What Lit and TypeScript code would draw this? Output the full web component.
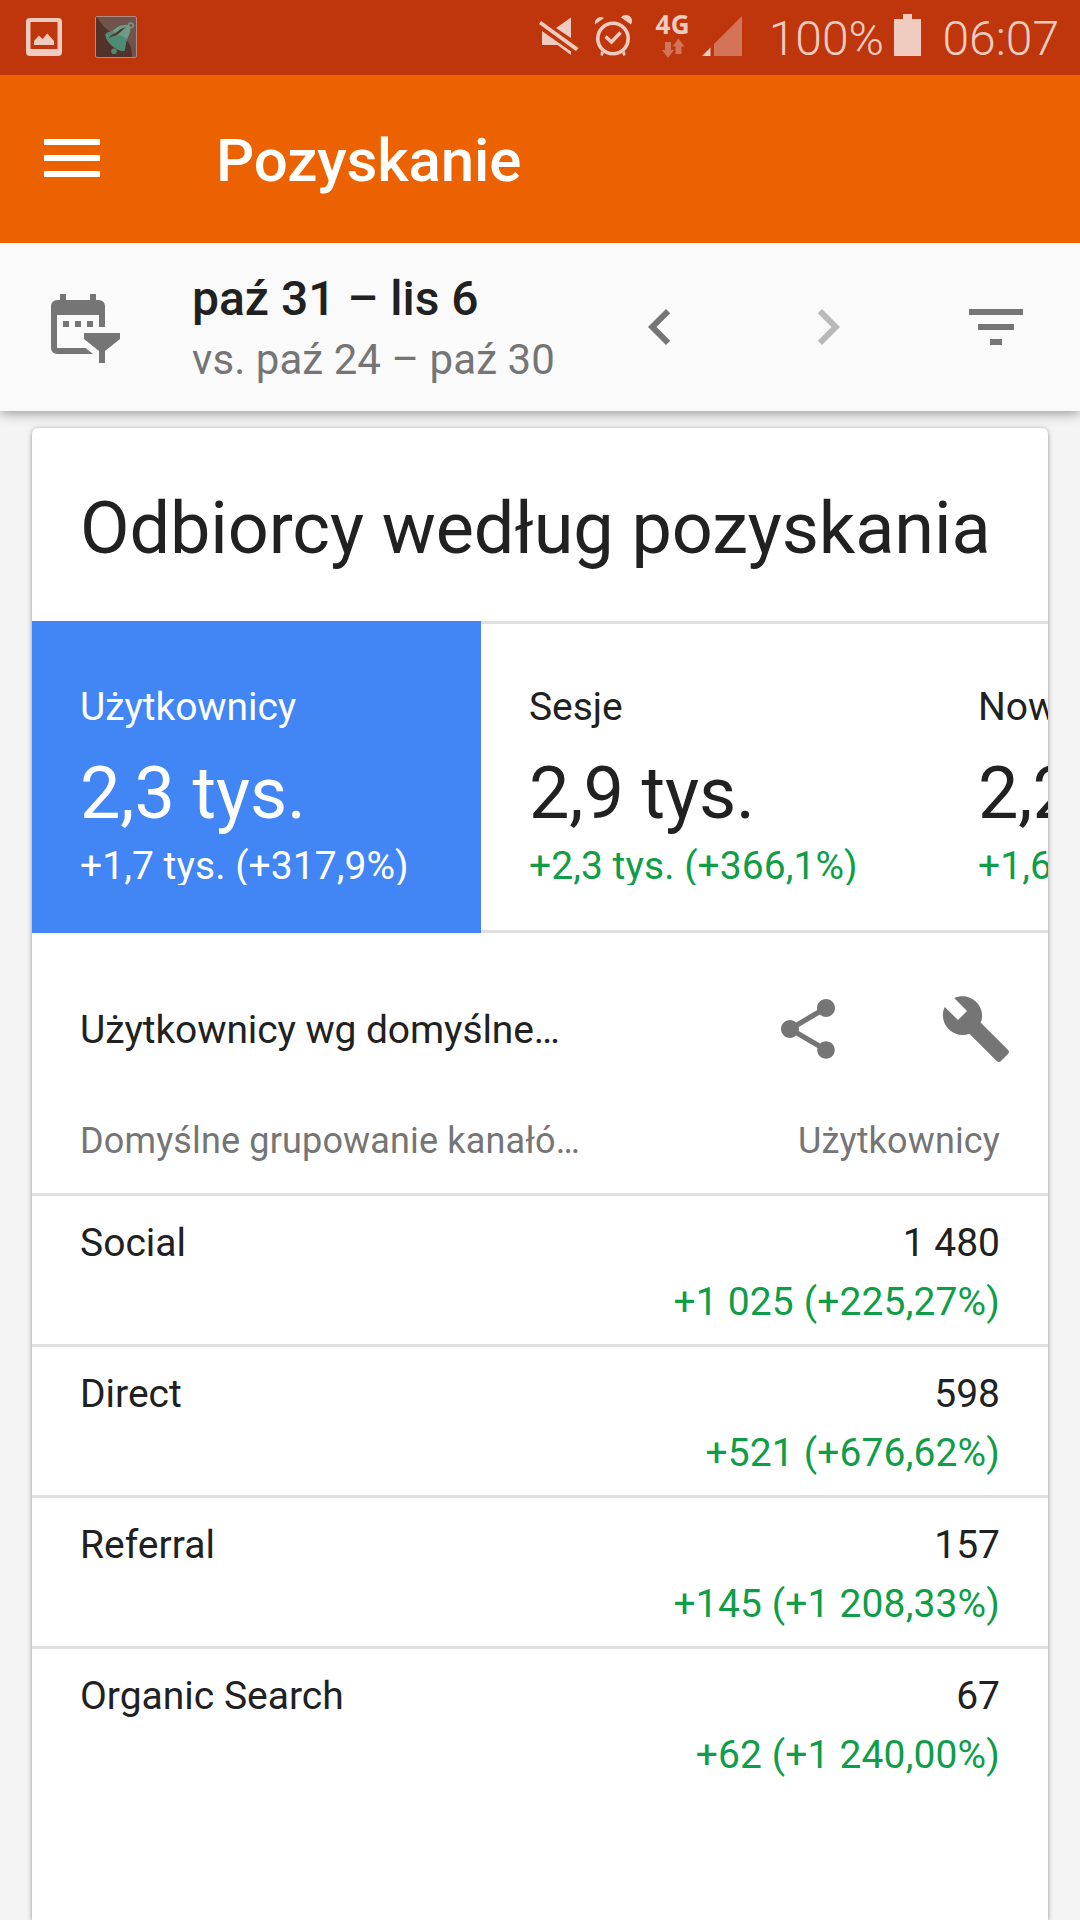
import { LitElement, html, css, svg } from "lit";
import { customElement, property } from "lit/decorators.js";

interface Metric {
  label: string;
  value: string;
  change: string;
}

interface Channel {
  name: string;
  users: string;
  change: string;
}

const METRICS: Metric[] = [
  { label: "Użytkownicy", value: "2,3 tys.", change: "+1,7 tys. (+317,9%)" },
  { label: "Sesje", value: "2,9 tys.", change: "+2,3 tys. (+366,1%)" },
  { label: "Nowi", value: "2,2 tys.", change: "+1,6 tys." },
];

const CHANNELS: Channel[] = [
  { name: "Social", users: "1 480", change: "+1 025 (+225,27%)" },
  { name: "Direct", users: "598", change: "+521 (+676,62%)" },
  { name: "Referral", users: "157", change: "+145 (+1 208,33%)" },
  { name: "Organic Search", users: "67", change: "+62 (+1 240,00%)" },
];

const GLYPHS: Record<string, unknown> = {
  prev: svg`<path d="M15.41 7.41L14 6l-6 6 6 6 1.41-1.41L10.83 12z"/>`,
  next: svg`<path d="M10 6L8.59 7.41 13.17 12l-4.58 4.59L10 18l6-6z"/>`,
  filter: svg`<path d="M10 18h4v-2h-4v2zM3 6v2h18V6H3zm3 7h12v-2H6v2z"/>`,
  share: svg`<path d="M18 16.08c-.76 0-1.44.3-1.96.77L8.91 12.7c.05-.23.09-.46.09-.7s-.04-.47-.09-.7l7.05-4.11c.54.5 1.25.81 2.04.81 1.66 0 3-1.34 3-3s-1.34-3-3-3-3 1.34-3 3c0 .24.04.47.09.7L8.04 9.81C7.5 9.31 6.79 9 6 9c-1.66 0-3 1.34-3 3s1.34 3 3 3c.79 0 1.5-.31 2.04-.81l7.12 4.16c-.05.21-.08.43-.08.65 0 1.61 1.31 2.92 2.92 2.92 1.61 0 2.92-1.31 2.92-2.92s-1.31-2.92-2.92-2.92z"/>`,
  build: svg`<path d="M22.7 19l-9.1-9.1c.9-2.3.4-5-1.5-6.9-2-2-5-2.4-7.4-1.3L9 6 6 9 1.6 4.7C.4 7.1.9 10.1 2.9 12.1c1.9 1.9 4.6 2.4 6.9 1.5l9.1 9.1c.4.4 1 .4 1.4 0l2.3-2.3c.5-.4.5-1.1.1-1.4z"/>`,
};

@customElement("md-icon")
export class MdIcon extends LitElement {
  @property() name = "";

  static styles = css`
    :host {
      display: block;
      flex: none;
      width: 72px;
      height: 72px;
    }
    svg {
      display: block;
      width: 72px;
      height: 72px;
      fill: currentColor;
    }
  `;

  render() {
    return html`<svg viewBox="0 0 24 24">${GLYPHS[this.name]}</svg>`;
  }
}

@customElement("status-bar")
export class StatusBar extends LitElement {
  static styles = css`
    :host {
      display: flex;
      height: 75px;
      background: #bf360c;
      color: #efcbc0;
      font-size: 48px;
      font-weight: 340;
      line-height: 77px;
    }
    svg {
      display: block;
      flex: none;
    }
    .battery,
    .clock {
      white-space: nowrap;
    }
    .battery {
      width: 124px;
      text-align: right;
    }
    .clock {
      margin-left: auto;
      padding-right: 21px;
    }
  `;

  render() {
    return html`
      <svg width="160" height="75" viewBox="0 0 160 75">
        <path
          fill="#efcbc0"
          fill-rule="evenodd"
          d="M30 18h28a4 4 0 0 1 4 4v30a4 4 0 0 1-4 4H30a4 4 0 0 1-4-4V22a4 4 0 0 1 4-4zM30.500 22v27h27V22z"
        />
        <path fill="#efcbc0" d="M34 45v-4l5-5.500 3.500 3.500 4.800-5.500 6.700 7.500v4z" />
        <rect x="95.500" y="16.500" width="41" height="41" rx="1" fill="#51332b" />
        <path fill="#70544c" d="M97 17h39.500v40h-4.500C132 47 130 42 122 37 109 33 102 26 97 17z" />
        <rect x="95.500" y="16.500" width="41" height="41" rx="1.500" fill="none" stroke="#b28c81" />
        <path
          fill="#6e9a87"
          d="M105.500 34.500c1-2.500 4-2 7-3.500 4-3.500 7-6.500 15-6.300 4 1 3.500 6 1.500 10.300-2 4-3.500 7-4 15-2 2-7 0-10-2-4-3-9-7-9.500-13.500z"
        />
        <path
          fill="#4d8b75"
          d="M105.500 34.500c1-2.500 4-2 7-3.500l5 4c4 0 7 3 10.300 3.500-1.800 3.500-2.600 5.500-2.800 11.500-2 2-7 0-10-2-4-3-9-7-9.500-13.500z"
        />
        <path d="M109 38.500c1-4 5-4 8-6.500 3-2.500 5-4 9-4.500-4 2-6 6-9.500 7.500-3 1.500-5 1-7.500 3.500z" fill="#51332b" />
        <circle cx="131" cy="25.300" r="2.300" fill="none" stroke="#6e9a87" stroke-width="1.500" />
        <circle cx="114" cy="51.300" r="2.800" fill="#4d8b75" />
      </svg>
      <svg width="600" height="75" viewBox="160 0 600 75">
        <g fill="#efcbc0">
          <path d="M542 31v14h15.500l13.500 10V51.500zM556 28l15-10.500v20.500z" />
          <path d="M541 21l37.500 27-2.500 3-37-27z" />
          <path d="M595 24.500a6 6 0 0 1 9-6.500zM621 17.500a6 6 0 0 1 10 7z" />
          <circle cx="613" cy="38.500" r="15.200" fill="none" stroke="#efcbc0" stroke-width="3.600" />
          <path d="M601 51l3 2-1.500 3-2-1zM625 51l-3 2 1.500 3 2-1z" />
          <path d="M605.500 36.500l6 5.500 9-9.500" fill="none" stroke="#efcbc0" stroke-width="3.400" />
          <text x="655.500" y="34" font-family="Open Sans" font-size="26" font-weight="700" textLength="34">4G</text>
          <path d="M702 56l8.500-8.500V56z" />
        </g>
        <g fill="#d37357">
          <path d="M665 42h6v8h3l-6 8-6-8h3zM678.500 38.500l6 8h-3V54h-6v-7.500h-3z" />
          <path d="M714 56V44l28-28v40z" />
        </g>
      </svg>
      <span class="battery">100%</span>
      <svg width="44" height="75" viewBox="884 0 44 75">
        <path fill="#efcbc0" d="M894 19h9v-5h9v5h9v37h-27z" />
      </svg>
      <span class="clock">06:07</span>
    `;
  }
}

@customElement("metric-tab")
export class MetricTab extends LitElement {
  @property({ attribute: false }) metric!: Metric;
  @property({ type: Boolean, reflect: true }) selected = false;

  static styles = css`
    :host {
      display: block;
      flex: none;
      box-sizing: border-box;
      width: 449px;
      height: 312px;
      padding: 60px 0 0 48px;
      border: solid #e0e0e0;
      border-width: 3px 0;
      white-space: nowrap;
    }
    :host([selected]) {
      background: #4285f4;
      border-color: #4285f4;
      color: #fff;
    }
    .label {
      line-height: 46px;
      letter-spacing: -0.09px;
    }
    .value {
      margin-top: 22px;
      font-size: 72px;
      line-height: 84px;
      letter-spacing: -0.1px;
    }
    .change {
      height: 42px;
      margin-top: 7px;
      overflow: hidden;
      line-height: 46px;
      letter-spacing: 0.06px;
      color: #0f9d48;
    }
    :host([selected]) .change {
      color: #fff;
    }
  `;

  render() {
    return html`
      <div class="label">${this.metric.label}</div>
      <div class="value">${this.metric.value}</div>
      <div class="change">${this.metric.change}</div>
    `;
  }
}

@customElement("app-root")
export class AppRoot extends LitElement {
  static styles = css`
    :host {
      display: flex;
      flex-direction: column;
      width: 1080px;
      height: 1920px;
      overflow: hidden;
      background: #f4f4f4;
      color: #212121;
      font-family: Roboto, "Liberation Sans", sans-serif;
      font-size: 39px;
    }
    .appbar {
      display: flex;
      flex: none;
      align-items: center;
      box-sizing: border-box;
      height: 168px;
      padding: 0 44px;
      background: #ec6200;
      color: #fff;
    }
    .menu {
      display: flex;
      flex-direction: column;
      gap: 10px;
      width: 56px;
      margin-right: 116px;
      padding-bottom: 2px;
    }
    .menu i {
      height: 6px;
      background: #fff;
    }
    .heading {
      padding-top: 4px;
      font-size: 60px;
      font-weight: 500;
      line-height: 70px;
      letter-spacing: -0.12px;
    }
    .datebar {
      display: flex;
      flex: none;
      box-sizing: border-box;
      height: 168px;
      padding: 0 48px;
      background: #fafafa;
      box-shadow: 0 2px 12px rgba(0, 0, 0, 0.4);
      clip-path: inset(0 0 -20px 0);
      color: #757575;
      z-index: 1;
    }
    .calendar {
      flex: none;
      margin-top: 48px;
      fill: #757575;
    }
    .range {
      width: 432px;
      padding: 28px 0 0 72px;
      white-space: nowrap;
    }
    .current {
      color: #212121;
      font-size: 48px;
      font-weight: 500;
      line-height: 56px;
    }
    .previous {
      margin-top: 8px;
      font-size: 42px;
      line-height: 50px;
      letter-spacing: 0.06px;
    }
    .controls {
      display: flex;
      gap: 96px;
      padding-top: 48px;
    }
    .disabled {
      color: #b9b9b9;
    }
    .card {
      flex: 1;
      margin: 17px 32px 0;
      border-radius: 6px 6px 0 0;
      background: #fff;
      box-shadow: 0 1px 5px rgba(0, 0, 0, 0.4);
    }
    .title {
      height: 134px;
      padding: 59px 48px 0;
      font-size: 72px;
      line-height: 84px;
      letter-spacing: -0.09px;
      white-space: nowrap;
    }
    .metrics {
      display: flex;
      overflow: hidden;
    }
    .section {
      display: flex;
      align-items: center;
      justify-content: space-between;
      padding: 60px 36px 0 48px;
    }
    .section-title {
      padding-top: 2px;
      line-height: 46px;
      letter-spacing: -0.11px;
    }
    .actions {
      display: flex;
      gap: 96px;
      color: #757575;
    }
    .columns {
      display: flex;
      justify-content: space-between;
      height: 73px;
      padding: 55px 48px 0;
      color: #757575;
      font-size: 36px;
      line-height: 42px;
      letter-spacing: 0.15px;
    }
    .row {
      display: flex;
      justify-content: space-between;
      box-sizing: border-box;
      height: 151px;
      padding: 24px 48px 0;
      border-top: 3px solid #e0e0e0;
      line-height: 46px;
    }
    .figures {
      text-align: right;
    }
    .delta {
      margin-top: 13px;
      letter-spacing: 0.14px;
      color: #0f9d48;
    }
  `;

  render() {
    return html`
      <status-bar></status-bar>
      <header class="appbar">
        <div class="menu"><i></i><i></i><i></i></div>
        <div class="heading">Pozyskanie</div>
      </header>
      <div class="datebar">
        <svg class="calendar" width="72" height="72" viewBox="48 291 72 72">
          <path
            fill-rule="evenodd"
            d="M60 294h6v6h24v-6h6v6h3a6 6 0 0 1 6 6v21h-6v-12H57v33h28.500l7.500 6H57a6 6 0 0 1-6-6v-42a6 6 0 0 1 6-6h3z"
          />
          <path d="M63 321h6v6h-6zM75 321h6v6h-6zM87 321h6v6h-6z" />
          <path d="M84 333h36v6l-15 12v12h-6v-12l-15-12z" />
        </svg>
        <div class="range">
          <div class="current">paź 31 – lis 6</div>
          <div class="previous">vs. paź 24 – paź 30</div>
        </div>
        <div class="controls">
          <md-icon name="prev"></md-icon>
          <md-icon class="disabled" name="next"></md-icon>
          <md-icon name="filter"></md-icon>
        </div>
      </div>
      <main class="card">
        <div class="title">Odbiorcy według pozyskania</div>
        <div class="metrics">
          ${METRICS.map(
            (m, i) => html`<metric-tab .metric=${m} ?selected=${i === 0}></metric-tab>`
          )}
        </div>
        <div class="section">
          <div class="section-title">Użytkownicy wg domyślne…</div>
          <div class="actions">
            <md-icon name="share"></md-icon>
            <md-icon name="build"></md-icon>
          </div>
        </div>
        <div class="columns">
          <span>Domyślne grupowanie kanałó…</span>
          <span>Użytkownicy</span>
        </div>
        ${CHANNELS.map(
          (c) => html`
            <div class="row">
              <div>${c.name}</div>
              <div class="figures">
                <div>${c.users}</div>
                <div class="delta">${c.change}</div>
              </div>
            </div>
          `
        )}
      </main>
    `;
  }
}
